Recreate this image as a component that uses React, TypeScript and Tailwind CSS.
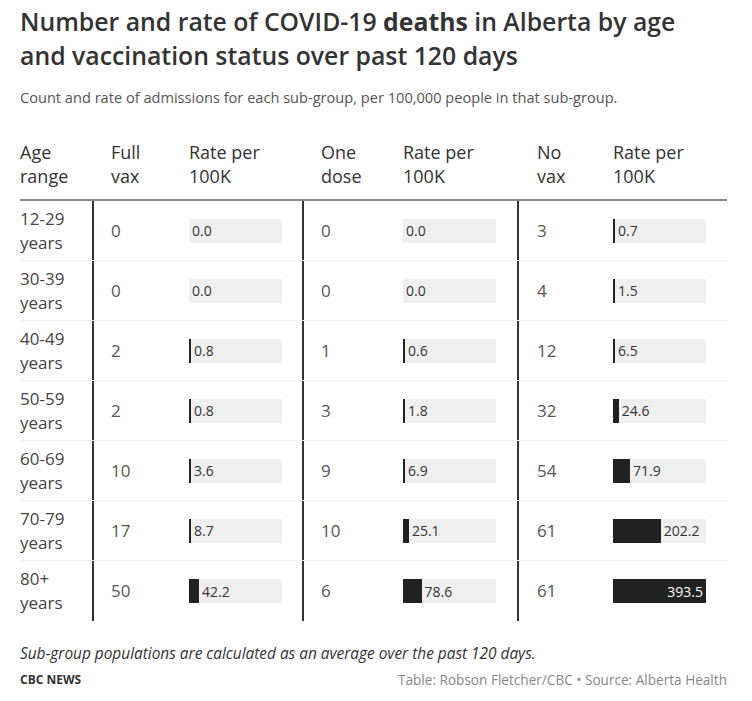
import React from "react";

type Row = { age: string; full: number; fullRate: number; one: number; oneRate: number; no: number; noRate: number };

const rows: Row[] = [
  { age: "12-29", full: 0, fullRate: 0.0, one: 0, oneRate: 0.0, no: 3, noRate: 0.7 },
  { age: "30-39", full: 0, fullRate: 0.0, one: 0, oneRate: 0.0, no: 4, noRate: 1.5 },
  { age: "40-49", full: 2, fullRate: 0.8, one: 1, oneRate: 0.6, no: 12, noRate: 6.5 },
  { age: "50-59", full: 2, fullRate: 0.8, one: 3, oneRate: 1.8, no: 32, noRate: 24.6 },
  { age: "60-69", full: 10, fullRate: 3.6, one: 9, oneRate: 6.9, no: 54, noRate: 71.9 },
  { age: "70-79", full: 17, fullRate: 8.7, one: 10, oneRate: 25.1, no: 61, noRate: 202.2 },
  { age: "80+", full: 50, fullRate: 42.2, one: 6, oneRate: 78.6, no: 61, noRate: 393.5 },
];

const MAX = 393.5;
const BAR_W = 93;

function Bar({ v }: { v: number }) {
  const w = v > 0 ? Math.max((v / MAX) * BAR_W, 2) : 0;
  const full = v === MAX;
  return (
    <div className="flex h-[24px] w-[93px] items-center bg-[#efefef]">
      <div className="h-full shrink-0 bg-[#222222]" style={{ width: w }}>
        {full && (
          <div className="flex h-full items-center justify-end pr-[3px] text-[14px] text-white">
            {v.toFixed(1)}
          </div>
        )}
      </div>
      {!full && <span className="pl-[3px] text-[14px] text-[#333]">{v.toFixed(1)}</span>}
    </div>
  );
}

export default function App() {
  const cols = "grid grid-cols-[72px_97px_113px_101px_114px_96px_114px]";
  return (
    <div
      className="min-h-[701px] w-[752px] bg-white px-[20px] pt-[4px] text-[#333]"
      style={{ fontFamily: '"Open Sans", "Noto Sans", sans-serif' }}
    >
      <h1 className="max-w-[680px] text-[24.8px] font-semibold leading-[34px] text-[#333]">
        Number and rate of COVID-19 <span className="font-bold">deaths</span> in Alberta by age and vaccination status over past 120 days
      </h1>
      <p className="mt-[15px] text-[14.6px] leading-[20px] text-[#555]">
        Count and rate of admissions for each sub-group, per 100,000 people in that sub-group.
      </p>

      <div className="mt-[33px] w-[707px]">
        <div className={`${cols} border-b-2 border-[#888] pb-[11px] text-[18px] leading-[24px] text-[#333]`}>
          <div>Age<br />range</div>
          <div className="pl-[19px]">Full<br />vax</div>
          <div>Rate per<br />100K</div>
          <div className="pl-[19px]">One<br />dose</div>
          <div>Rate per<br />100K</div>
          <div className="pl-[20px]">No<br />vax</div>
          <div>Rate per<br />100K</div>
        </div>
        {rows.map((r, i) => (
          <div
            key={r.age}
            className={`${cols} h-[60px] ${i < rows.length - 1 ? "border-b border-[#eeeeee]" : ""} text-[17px] text-[#444]`}
          >
            <div className="flex flex-col justify-center leading-[24px] text-[#444]">
              <span>{r.age}</span>
              <span>years</span>
            </div>
            <div className="flex items-center border-l-2 border-[#333] pl-[17px] text-[#555]">{r.full}</div>
            <div className="flex items-center">
              <Bar v={r.fullRate} />
            </div>
            <div className="flex items-center border-l-2 border-[#333] pl-[17px] text-[#555]">{r.one}</div>
            <div className="flex items-center">
              <Bar v={r.oneRate} />
            </div>
            <div className="flex items-center border-l-2 border-[#333] pl-[18px] text-[#555]">{r.no}</div>
            <div className="flex items-center">
              <Bar v={r.noRate} />
            </div>
          </div>
        ))}
      </div>

      <p className="mt-[23px] text-[15.4px] italic leading-[20px] text-[#333]">
        Sub-group populations are calculated as an average over the past 120 days.
      </p>
      <div className="mt-[6px] flex w-[707px] items-center justify-between">
        <span className="text-[12px] font-bold text-[#333]">CBC NEWS</span>
        <span className="text-[13.6px] text-[#888]">Table: Robson Fletcher/CBC • Source: Alberta Health</span>
      </div>
    </div>
  );
}
